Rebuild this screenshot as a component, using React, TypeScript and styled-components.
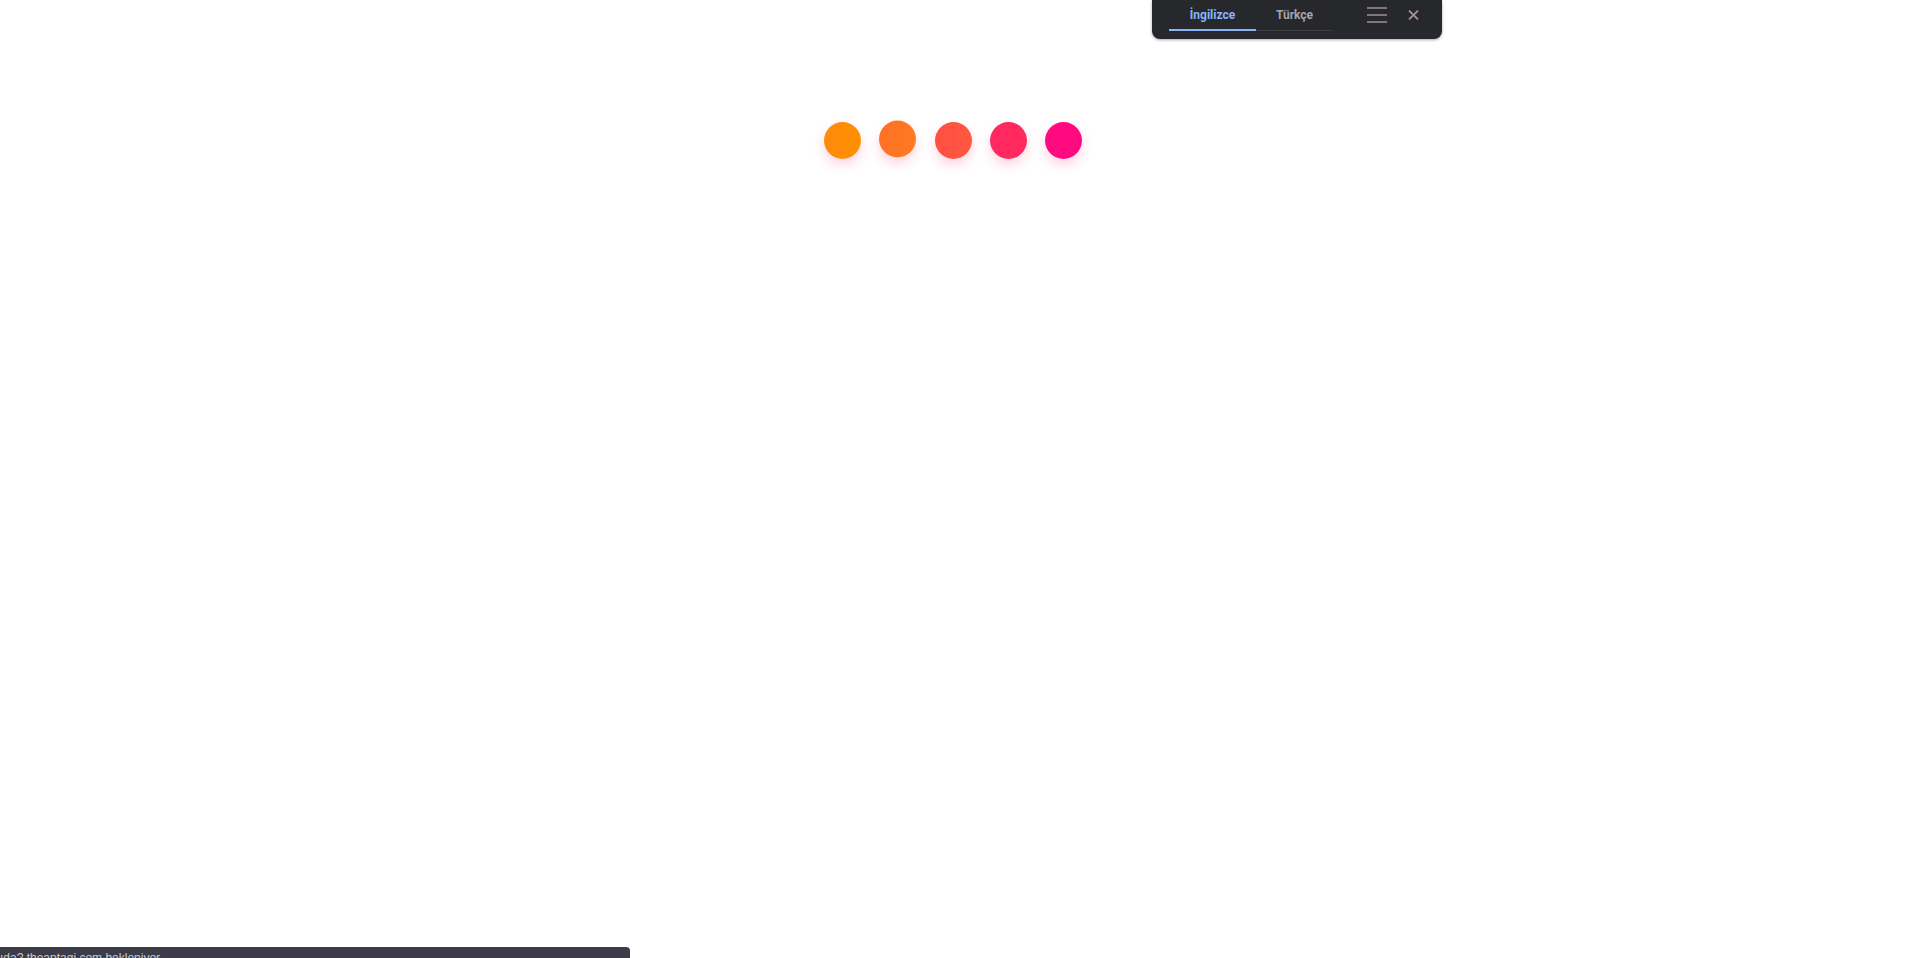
import React from "react";
import styled, { createGlobalStyle } from "styled-components";

const Global = createGlobalStyle`
  html, body { margin: 0; padding: 0; background: #ffffff; }
  body { font-family: Roboto, "Liberation Sans", sans-serif; }
  #root { min-height: 958px; }
`;

const Page = styled.div`
  position: relative;
  width: 100%;
  min-height: 958px;
  overflow: hidden;
`;

const DotsRow = styled.div`
  display: flex;
  justify-content: center;
  gap: 18.3px;
  padding-top: 122px;
  padding-right: 2px;
`;

const Dot = styled.div<{ $from: string; $to: string; $lift: number }>`
  width: 37px;
  height: 37px;
  border-radius: 50%;
  background: linear-gradient(to right, ${(p) => p.$from}, ${(p) => p.$to});
  box-shadow: 0 6px 12px rgba(255, 70, 110, 0.22);
  transform: translateY(${(p) => -p.$lift}px);
`;

const Bar = styled.div`
  position: absolute;
  top: 0;
  left: 1152px;
  width: 290px;
  height: 39px;
  background: #27282c;
  border-radius: 0 0 8px 8px;
  box-shadow: 0 1px 3px rgba(0, 0, 0, 0.35);
  display: flex;
  align-items: stretch;
  padding-left: 17px;
  box-sizing: border-box;
`;

const Tabs = styled.div`
  display: flex;
  height: 31px;
  border-bottom: 1px solid #3c3d42;
  box-sizing: border-box;
`;

const Tab = styled.div<{ $active?: boolean; $w: number }>`
  width: ${(p) => p.$w}px;
  display: flex;
  align-items: center;
  justify-content: center;
  padding-bottom: 1px;
  font-size: 12px;
  font-weight: 700;
  color: ${(p) => (p.$active ? "#8ab4f8" : "#a3a5ab")};
  position: relative;
  &::after {
    content: "";
    position: absolute;
    left: 0;
    right: 0;
    bottom: -1px;
    height: 2px;
    background: ${(p) => (p.$active ? "#8ab4f8" : "transparent")};
  }
`;

const IconButton = styled.div<{ $ml: number }>`
  margin-left: ${(p) => p.$ml}px;
  height: 30px;
  display: flex;
  align-items: center;
`;

const Status = styled.div`
  position: absolute;
  left: 0;
  bottom: 0;
  width: 630px;
  height: 11px;
  background: #3b3c47;
  border-radius: 0 4px 0 0;
  overflow: hidden;
  color: #c9cad2;
  font-family: "Liberation Sans", Arial, sans-serif;
  font-size: 12px;
  line-height: 14px;
  padding-top: 4px;
  box-sizing: border-box;
  white-space: nowrap;
`;

const dots = [
  { from: "#ff8a0c", to: "#ff8f00", lift: 0 },
  { from: "#ff7028", to: "#ff7a20", lift: 1.5 },
  { from: "#ff4f44", to: "#ff5840", lift: 0 },
  { from: "#ff2862", to: "#ff2a5c", lift: 0 },
  { from: "#ff0a82", to: "#ff0a80", lift: 0 },
];

export default function App() {
  return (
    <Page>
      <Global />
      <DotsRow>
        {dots.map((d, i) => (
          <Dot key={i} $from={d.from} $to={d.to} $lift={d.lift} />
        ))}
      </DotsRow>
      <Bar>
        <Tabs>
          <Tab $active $w={87}>İngilizce</Tab>
          <Tab $w={77}>Türkçe</Tab>
        </Tabs>
        <IconButton $ml={34}>
          <svg width="20" height="16" viewBox="0 0 20 16">
            <path d="M0 1h20M0 8h20M0 15h20" stroke="#a18f9a" strokeWidth="1.6" />
          </svg>
        </IconButton>
        <IconButton $ml={21}>
          <svg width="11" height="10" viewBox="0 0 11 10">
            <path d="M1 0.5l9 9M10 0.5l-9 9" stroke="#a18f9a" strokeWidth="1.8" />
          </svg>
        </IconButton>
      </Bar>
      <Status>ıda? theaptagi.com bekleniyor...</Status>
    </Page>
  );
}
